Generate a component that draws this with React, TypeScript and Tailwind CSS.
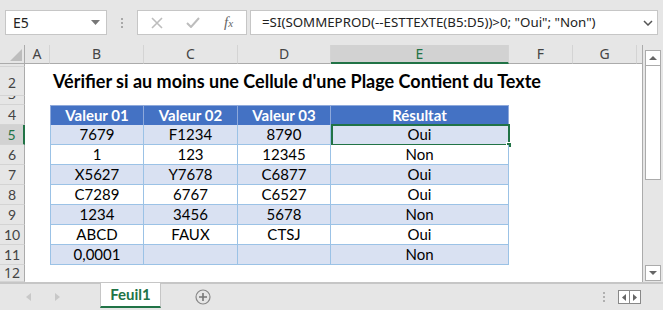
const cellFont = { fontFamily: "Lato, 'Liberation Sans', sans-serif" };

const COLS = [
  { key: "A", w: "w-[25px]" },
  { key: "B", w: "w-[94px]" },
  { key: "C", w: "w-[94px]" },
  { key: "D", w: "w-[93px]" },
  { key: "E", w: "w-[178px]" },
  { key: "F", w: "w-[64px]" },
  { key: "G", w: "w-[64px]" },
  { key: "", w: "w-[6px]" },
];

const DATA = [
  ["7679", "F1234", "8790", "Oui"],
  ["1", "123", "12345", "Non"],
  ["X5627", "Y7678", "C6877", "Oui"],
  ["C7289", "6767", "C6527", "Oui"],
  ["1234", "3456", "5678", "Non"],
  ["ABCD", "FAUX", "CTSJ", "Oui"],
  ["0,0001", "", "", "Non"],
];

function RowHead({ n, h, active, bottom }: { n: string; h: string; active?: boolean; bottom?: boolean }) {
  return (
    <div
      className={`${h} w-[25px] shrink-0 flex justify-center overflow-hidden border-b border-[#d4d4d4] text-[14px] leading-none ${
        bottom ? "items-end pb-[5px]" : "items-center"
      } ${
        active
          ? "bg-[#d2d2d2] border-r-2 border-r-[#217346] text-[#217346]"
          : "bg-[#e6e6e6] border-r border-r-[#ababab] text-[#444]"
      }`}
    >
      {n}
    </div>
  );
}

function Toolbar() {
  return (
    <div className="h-[45px] flex items-center pl-[5px] bg-[#e6e6e6]">
      <div className="w-[102px] h-[25px] bg-white border border-[#c6c6c6] flex items-center justify-between pl-[7px] pr-[6px] text-[14px] text-[#222]">
        <span>E5</span>
        <svg width="9" height="5" viewBox="0 0 9 5">
          <path d="M0 0h9L4.5 5z" fill="#777" />
        </svg>
      </div>
      <div className="w-[30px] flex flex-col items-center gap-[2px]">
        <span className="w-[2px] h-[2px] bg-[#a8a8a8]" />
        <span className="w-[2px] h-[2px] bg-[#a8a8a8]" />
        <span className="w-[2px] h-[2px] bg-[#a8a8a8]" />
      </div>
      <div className="w-[110px] h-[25px] bg-white border border-[#c6c6c6] flex items-center">
        <svg className="ml-[13px]" width="12" height="12" viewBox="0 0 12 12">
          <path d="M1 1l10 10M11 1L1 11" stroke="#bdbdbd" strokeWidth="1.6" />
        </svg>
        <svg className="ml-[23px]" width="14" height="11" viewBox="0 0 14 11">
          <path d="M1 6l4 4 8-9" stroke="#bdbdbd" strokeWidth="2" fill="none" />
        </svg>
        <span className="ml-[24px] text-[15px] italic text-[#666]" style={{ fontFamily: "'Liberation Serif', serif" }}>
          f<span className="text-[11px]">x</span>
        </span>
      </div>
      <div className="ml-[3px] w-[408px] h-[25px] bg-white border border-[#c6c6c6] flex items-center justify-between pl-[11px] pr-[4px] text-[13.3px] text-[#222]">
        <span>=SI(SOMMEPROD(--ESTTEXTE(B5:D5))&gt;0; "Oui"; "Non")</span>
        <svg width="10" height="6" viewBox="0 0 10 6">
          <path d="M1 1l4 4 4-4" stroke="#555" strokeWidth="1.5" fill="none" />
        </svg>
      </div>
    </div>
  );
}

function ColumnHeader() {
  return (
    <div className="h-[20px] flex">
      <div className="w-[25px] shrink-0 relative bg-[#e6e6e6] border-r border-r-[#ababab] border-b border-b-[#ababab]">
        <svg className="absolute right-[2px] bottom-[2px]" width="12" height="12" viewBox="0 0 12 12">
          <path d="M12 0v12H0z" fill="#bdbdbd" />
        </svg>
      </div>
      {COLS.map((c) => (
        <div
          key={c.key + c.w}
          className={`${c.w} shrink-0 flex items-center justify-center text-[14px] leading-none border-r border-r-[#d4d4d4] ${
            c.key === "E"
              ? "bg-[#d2d2d2] border-b-2 border-b-[#217346] text-[#217346]"
              : "bg-[#e6e6e6] border-b border-b-[#ababab] text-[#444]"
          }`}
        >
          {c.key}
        </div>
      ))}
    </div>
  );
}

function Sheet() {
  return (
    <div className="w-[643px] flex flex-col bg-white border-r border-[#ababab] overflow-hidden">
      <ColumnHeader />
      {/* ligne 1 */}
      <div className="flex h-[3px]">
        <RowHead n="" h="h-[3px]" />
      </div>
      {/* ligne 2 : titre */}
      <div className="flex h-[29px]">
        <RowHead n="2" h="h-[29px]" bottom />
        <div className="flex items-center pl-[28px] text-[18px] font-bold text-black whitespace-nowrap" style={cellFont}>
          Vérifier si au moins une Cellule d'une Plage Contient du Texte
        </div>
      </div>
      {/* ligne 3 */}
      <div className="flex h-[9px]">
        <div className="h-[9px] w-[25px] bg-[#e6e6e6] border-r border-[#ababab] border-b border-b-[#d4d4d4] overflow-hidden text-[14px] leading-none text-[#444] flex justify-center">
          <span className="-mt-[9px]">3</span>
        </div>
      </div>
      {/* ligne 4 : en-tetes */}
      <div className="flex h-[20px]" style={cellFont}>
        <RowHead n="4" h="h-[20px]" />
        <div className="w-[25px]" />
        {["Valeur 01", "Valeur 02", "Valeur 03", "Résultat"].map((t, i) => (
          <div
            key={t}
            className={`${["w-[94px]", "w-[94px]", "w-[93px]", "w-[178px]"][i]} h-[20px] flex items-center justify-center bg-[#4472c4] text-white font-bold text-[15px] border-t border-r border-[#8ea9db] ${
              i === 0 ? "border-l" : ""
            }`}
          >
            {t}
          </div>
        ))}
      </div>
      {DATA.map((row, r) => (
        <div key={r} className="flex h-[20px] relative" style={cellFont}>
          <RowHead n={String(r + 5)} h="h-[20px]" active={r === 0} />
          <div className="w-[25px]" />
          {row.map((v, i) => (
            <div
              key={i}
              className={`${["w-[94px]", "w-[94px]", "w-[93px]", "w-[178px]"][i]} h-[20px] flex items-center justify-center text-[15px] text-black border-r border-b border-[#9bc2e6] ${
                i === 0 ? "border-l" : ""
              } ${r % 2 === 0 ? "bg-[#d9e1f2]" : "bg-white"}`}
            >
              {v}
            </div>
          ))}
          {r === 0 && (
            <div className="absolute left-[331px] top-[-1px] w-[179px] h-[22px] border-2 border-[#217346]">
              <div className="absolute right-[-4px] bottom-[-4px] w-[6px] h-[6px] bg-[#217346] border border-white" />
            </div>
          )}
        </div>
      ))}
      {/* ligne 12 */}
      <div className="flex h-[17px]">
        <RowHead n="12" h="h-[17px]" />
      </div>
    </div>
  );
}

function ScrollBar() {
  return (
    <div className="w-[20px] bg-[#e6e6e6] flex flex-col items-center pt-[5px] pb-[1px]">
      <div className="w-[16px] h-[16px] bg-white border border-[#ababab] flex items-center justify-center">
        <svg width="8" height="4" viewBox="0 0 8 4">
          <path d="M0 4h8L4 0z" fill="#666" />
        </svg>
      </div>
      <div className="w-[16px] h-[114px] bg-white border border-[#ababab] border-t-0" />
      <div className="flex-1" />
      <div className="w-[16px] h-[16px] bg-white border border-[#ababab] flex items-center justify-center">
        <svg width="8" height="4" viewBox="0 0 8 4">
          <path d="M0 0h8L4 4z" fill="#666" />
        </svg>
      </div>
    </div>
  );
}

function TabBar() {
  return (
    <div className="h-[27px] flex bg-[#e6e6e6]">
      <div className="w-[100px] border-t border-[#c6c6c6] flex items-center">
        <svg className="ml-[26px]" width="5" height="8" viewBox="0 0 5 8">
          <path d="M5 0v8L0 4z" fill="#c8c8c8" />
        </svg>
        <svg className="ml-[24px]" width="5" height="8" viewBox="0 0 5 8">
          <path d="M0 0v8l5-4z" fill="#c8c8c8" />
        </svg>
      </div>
      <div className="w-[61px] h-[25px] bg-white border-x border-[#c6c6c6] border-b-2 border-b-[#217346] flex items-center justify-center text-[15px] font-bold text-[#217346]" style={cellFont}>
        Feuil1
      </div>
      <div className="flex-1 border-t border-[#c6c6c6] flex items-center">
        <svg className="ml-[34px]" width="16" height="16" viewBox="0 0 16 16">
          <circle cx="8" cy="8" r="7" fill="none" stroke="#888" strokeWidth="1.2" />
          <path d="M8 4v8M4 8h8" stroke="#777" strokeWidth="1.6" />
        </svg>
        <div className="ml-auto flex flex-col gap-[2px] mr-[13px]">
          <span className="w-[2px] h-[2px] bg-[#b0b0b0]" />
          <span className="w-[2px] h-[2px] bg-[#b0b0b0]" />
          <span className="w-[2px] h-[2px] bg-[#b0b0b0]" />
        </div>
        <div className="w-[23px] h-[14px] border border-[#888] bg-white flex mr-[22px]">
          <div className="flex-1 flex items-center justify-center border-r border-[#888]">
            <svg width="4" height="7" viewBox="0 0 4 7">
              <path d="M4 0v7L0 3.5z" fill="#666" />
            </svg>
          </div>
          <div className="flex-1 flex items-center justify-center">
            <svg width="4" height="7" viewBox="0 0 4 7">
              <path d="M0 0v7l4-3.5z" fill="#666" />
            </svg>
          </div>
        </div>
      </div>
    </div>
  );
}

export default function App() {
  return (
    <div
      className="w-[663px] h-[310px] overflow-hidden bg-[#e6e6e6] flex flex-col"
      style={{ fontFamily: "'Noto Sans', 'Open Sans', sans-serif" }}
    >
      <Toolbar />
      <div className="h-[238px] flex border-b border-[#c6c6c6]">
        <Sheet />
        <ScrollBar />
      </div>
      <TabBar />
    </div>
  );
}
